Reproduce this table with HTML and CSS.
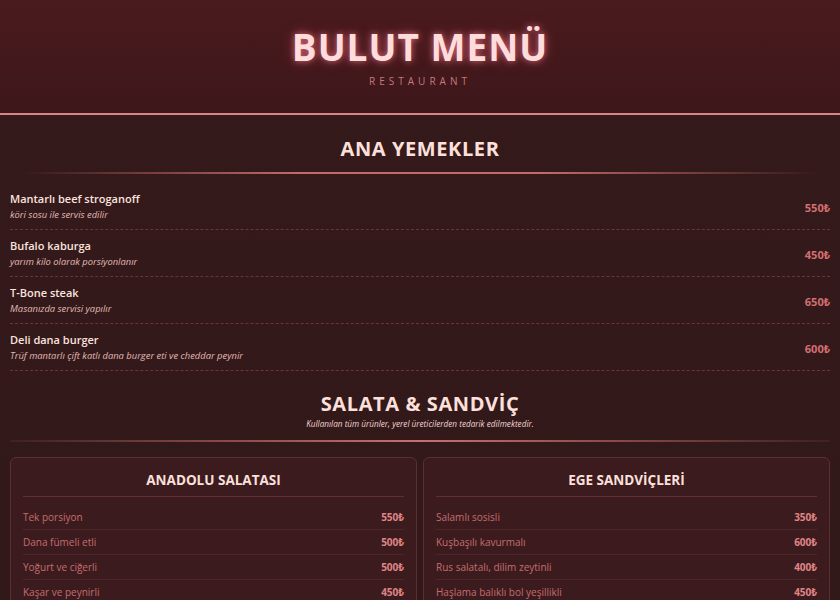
FILE: index.html
```html
<!DOCTYPE html>
<html lang="tr">
<head>
<meta charset="utf-8">
<title>Bulut Menü</title>
<link rel="stylesheet" href="styles.css">
</head>
<body>
<header class="hero">
  <h1 class="hero-title">BULUT MENÜ</h1>
  <div class="hero-sub">RESTAURANT</div>
</header>
<main class="page">
  <section class="section">
    <h2 class="section-title">ANA YEMEKLER</h2>
    <div class="divider"></div>
    <ul class="items">
      <li class="item">
        <div class="item-text">
          <div class="item-name">Mantarlı beef stroganoff</div>
          <div class="item-desc">köri sosu ile servis edilir</div>
        </div>
        <div class="item-price">550₺</div>
      </li>
      <li class="item">
        <div class="item-text">
          <div class="item-name">Bufalo kaburga</div>
          <div class="item-desc">yarım kilo olarak porsiyonlanır</div>
        </div>
        <div class="item-price">450₺</div>
      </li>
      <li class="item">
        <div class="item-text">
          <div class="item-name">T-Bone steak</div>
          <div class="item-desc">Masanızda servisi yapılır</div>
        </div>
        <div class="item-price">650₺</div>
      </li>
      <li class="item">
        <div class="item-text">
          <div class="item-name">Deli dana burger</div>
          <div class="item-desc">Trüf mantarlı çift katlı dana burger eti ve cheddar peynir</div>
        </div>
        <div class="item-price">600₺</div>
      </li>
    </ul>
  </section>

  <section class="section">
    <h2 class="section-title section-title-2">SALATA &amp; SANDVİÇ</h2>
    <p class="section-note">Kullanılan tüm ürünler, yerel üreticilerden tedarik edilmektedir.</p>
    <div class="divider divider-wide"></div>
    <div class="cards">
      <div class="card">
        <h3 class="card-title">ANADOLU SALATASI</h3>
        <ul class="rows">
          <li class="row"><span>Tek porsiyon</span><span class="row-price">550₺</span></li>
          <li class="row"><span>Dana fümeli etli</span><span class="row-price">500₺</span></li>
          <li class="row"><span>Yoğurt ve ciğerli</span><span class="row-price">500₺</span></li>
          <li class="row"><span>Kaşar ve peynirli</span><span class="row-price">450₺</span></li>
          <li class="row"><span>Ton balıklı</span><span class="row-price">500₺</span></li>
          <li class="row"><span>Mevsim yeşillikli</span><span class="row-price">400₺</span></li>
        </ul>
      </div>
      <div class="card">
        <h3 class="card-title">EGE SANDVİÇLERİ</h3>
        <ul class="rows">
          <li class="row"><span>Salamlı sosisli</span><span class="row-price">350₺</span></li>
          <li class="row"><span>Kuşbaşılı kavurmalı</span><span class="row-price">600₺</span></li>
          <li class="row"><span>Rus salatalı, dilim zeytinli</span><span class="row-price">400₺</span></li>
          <li class="row"><span>Haşlama balıklı bol yeşillikli</span><span class="row-price">450₺</span></li>
          <li class="row"><span>Tavuk göğüslü</span><span class="row-price">400₺</span></li>
          <li class="row"><span>Beyaz peynirli domatesli</span><span class="row-price">300₺</span></li>
        </ul>
      </div>
    </div>
  </section>

  <section class="section">
    <h2 class="section-title section-title-2">TATLILAR</h2>
    <div class="divider"></div>
    <ul class="items">
      <li class="item">
        <div class="item-text">
          <div class="item-name">Fırın sütlaç</div>
          <div class="item-desc">tarçın ve fındık ile</div>
        </div>
        <div class="item-price">200₺</div>
      </li>
      <li class="item">
        <div class="item-text">
          <div class="item-name">Künefe</div>
          <div class="item-desc">Antep fıstıklı, sıcak servis edilir</div>
        </div>
        <div class="item-price">300₺</div>
      </li>
      <li class="item">
        <div class="item-text">
          <div class="item-name">Kazandibi</div>
          <div class="item-desc">dondurma ile servis edilir</div>
        </div>
        <div class="item-price">250₺</div>
      </li>
    </ul>
  </section>
  <footer class="foot">© Bulut Menü Restaurant</footer>
</main>
</body>
</html>
```

FILE: styles.css
```css
html {
  background: #321a1b;
}
::-webkit-scrollbar {
  width: 3px;
}
::-webkit-scrollbar-track {
  background: transparent;
}
::-webkit-scrollbar-thumb {
  background: #c9b3b3;
}
body {
  margin: 0;
  font-family: "Open Sans", "Noto Sans", "DejaVu Sans", sans-serif;
  background: linear-gradient(180deg, #351a1c 0%, #311819 60%, #2f1718 100%);
  color: #f6dcd8;
}
.hero {
  text-align: center;
  padding: 23px 0 25px;
  background: linear-gradient(180deg, #4a1a1e 0%, #3d171a 100%);
  border-bottom: 2px solid #d88585;
}
.hero-title {
  margin: 0;
  font-size: 37px;
  line-height: 48px;
  font-weight: 700;
  letter-spacing: 1px;
  color: #ffdcdc;
  text-shadow: 0 0 6px rgba(255, 130, 150, 0.7), 0 0 14px rgba(255, 100, 120, 0.35);
}
.hero-sub {
  margin-top: 3px;
  font-size: 10px;
  line-height: 14px;
  letter-spacing: 4px;
  color: #c8777b;
}
.page {
  padding: 0 10px;
}
.section-title {
  margin: 20px 0 0;
  text-align: center;
  font-size: 20px;
  line-height: 28px;
  font-weight: 700;
  letter-spacing: 0.6px;
  color: #fde0dc;
}
.section-title-2 {
  margin-top: 19px;
}
.section-note {
  margin: 0;
  text-align: center;
  font-size: 8.2px;
  line-height: 12px;
  font-style: italic;
  color: #f0d6d2;
}
.divider {
  height: 2px;
  margin: 9px 10px 0;
  background: linear-gradient(90deg, rgba(200, 100, 100, 0) 0%, #c46a6a 35%, #c46a6a 65%, rgba(200, 100, 100, 0) 100%);
}
.divider-wide {
  margin: 10px 0 0;
  background: linear-gradient(90deg, rgba(200, 100, 100, 0.1) 0%, #c87070 50%, rgba(200, 100, 100, 0.1) 100%);
}
.items {
  list-style: none;
  margin: 9px 0 0;
  padding: 0;
}
.item {
  display: flex;
  align-items: center;
  justify-content: space-between;
  padding: 8px 0 7px;
  border-bottom: 1px dashed rgba(190, 95, 95, 0.4);
}
.item-name {
  font-size: 11px;
  line-height: 16px;
  font-weight: 600;
  color: #fbe3df;
}
.item-desc {
  margin-top: 1px;
  font-size: 9.4px;
  line-height: 14px;
  font-style: italic;
  color: #e2b9b5;
}
.item-price {
  padding-top: 2px;
  font-size: 11px;
  font-weight: 700;
  color: #d46f70;
}
.cards {
  display: grid;
  grid-template-columns: 1fr 1fr;
  gap: 6px;
  margin-top: 15px;
}
.card {
  background: #3c1b1e;
  border: 1px solid #5c2e31;
  border-radius: 6px;
  padding: 12px 12px 8px;
}
.card-title {
  margin: 0;
  padding-bottom: 6px;
  text-align: center;
  font-size: 13.5px;
  line-height: 20px;
  font-weight: 700;
  color: #fbe0dc;
  border-bottom: 1px solid #5e3033;
}
.rows {
  list-style: none;
  margin: 8px 0 0;
  padding: 0;
}
.row {
  display: flex;
  justify-content: space-between;
  padding: 6px 0;
  font-size: 10px;
  line-height: 12px;
  color: #c46d6f;
  border-bottom: 1px solid #4e2629;
}
.row-price {
  font-weight: 700;
  color: #e08686;
}
.foot {
  padding: 30px 0 40px;
  text-align: center;
  font-size: 9px;
  color: #a0686a;
}
```
